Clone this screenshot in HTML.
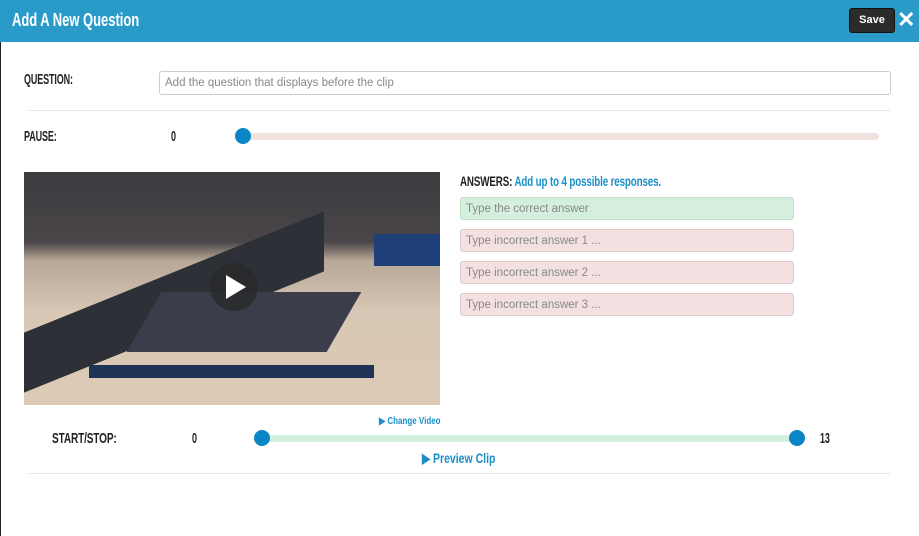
<!DOCTYPE html>
<html><head><style>
*{margin:0;padding:0;box-sizing:border-box}
body{width:919px;height:536px;background:#fff;position:relative;overflow:hidden;font-family:"Liberation Sans",sans-serif}
.c{font-family:"Liberation Sans",sans-serif;transform-origin:0 50%;white-space:nowrap}
.a{position:absolute}
.hdr{left:0;top:0;width:919px;height:42px;background:#2a9ac9}
.lbl{font-size:15px;color:#222;line-height:16px;font-weight:bold;letter-spacing:-0.2px}
.inp{border:1px solid #ccc;border-radius:3px;font-size:11.5px;color:#888;padding-left:5px;display:flex;align-items:center}
.knob{width:16px;height:16px;border-radius:50%;background:#0a86c6}
.blue{color:#1b8fc8}
</style></head><body>
<div class="a hdr"></div>
<div class="a c" style="left:12px;top:10px;font-size:18px;font-weight:bold;color:#fff;transform:scaleX(0.72)">Add A New Question</div>
<div class="a" style="left:849px;top:8px;width:46px;height:25px;background:#2b2b2b;border-radius:3px;border:1px solid #111;color:#fff;font-size:11px;font-weight:bold;text-align:center;line-height:23px">Save</div>
<div class="a" style="left:897px;top:7px;color:#fff;font-size:22px;font-weight:bold;line-height:26px">✕</div>
<div class="a" style="left:0;top:42px;width:1px;height:494px;background:#222"></div>

<div class="a c lbl" style="left:24px;top:72px;transform:scaleX(0.6)">QUESTION:</div>
<div class="a inp" style="left:159px;top:71px;width:732px;height:24px">Add the question that displays before the clip</div>
<div class="a" style="left:28px;top:110px;width:862px;height:1px;background:#e6e6e6"></div>

<div class="a c lbl" style="left:24px;top:129px;transform:scaleX(0.6)">PAUSE:</div>
<div class="a c lbl" style="left:171px;top:129px;transform:scaleX(0.6)">0</div>
<div class="a" style="left:243px;top:133px;width:636px;height:7px;background:#f2e1e1;border-radius:4px"></div>
<div class="a knob" style="left:235px;top:128px"></div>

<div class="a" style="left:24px;top:172px;width:416px;height:233px;overflow:hidden;background:linear-gradient(180deg,#3c3c40 0%,#4a4548 30%,#b7a797 38%,#d8c7b4 60%,#dccab6 100%)">
 <div class="a" style="left:0;top:100px;width:300px;height:60px;background:#2e3038;transform:skewY(-22deg)"></div>
 <div class="a" style="left:120px;top:120px;width:200px;height:60px;background:#3b3e4a;transform:skewX(-30deg)"></div>
 <div class="a" style="left:350px;top:62px;width:66px;height:32px;background:#1e3f78"></div>
 <div class="a" style="left:65px;top:193px;width:285px;height:13px;background:#1d3457"></div>
 <div class="a" style="left:186px;top:91px;width:48px;height:48px;border-radius:50%;background:rgba(40,40,40,.75)"></div>
 <div class="a" style="left:202px;top:103px;width:0;height:0;border-left:20px solid #fff;border-top:12px solid transparent;border-bottom:12px solid transparent"></div>
</div>

<div class="a c lbl" style="left:460px;top:173px;font-size:14px;transform:scaleX(0.7)"><span style="color:#222">ANSWERS:</span> <span class="blue">Add up to 4 possible responses.</span></div>
<div class="a inp" style="left:460px;top:197px;width:334px;height:23px;background:#d4efdd;border-color:#c3dfcc">Type the correct answer</div>
<div class="a inp" style="left:460px;top:229px;width:334px;height:23px;background:#f2e1e0;border-color:#dfcaca">Type incorrect answer 1 ...</div>
<div class="a inp" style="left:460px;top:261px;width:334px;height:23px;background:#f2e1e0;border-color:#dfcaca">Type incorrect answer 2 ...</div>
<div class="a inp" style="left:460px;top:293px;width:334px;height:23px;background:#f2e1e0;border-color:#dfcaca">Type incorrect answer 3 ...</div>

<div class="a c blue" style="left:379px;top:416px;font-size:10px;font-weight:bold;transform:scaleX(0.8)">▶ Change Video</div>
<div class="a c lbl" style="left:52px;top:431px;transform:scaleX(0.67)">START/STOP:</div>
<div class="a c lbl" style="left:192px;top:431px;transform:scaleX(0.6)">0</div>
<div class="a" style="left:262px;top:435px;width:535px;height:7px;background:#d3efdd"></div>
<div class="a knob" style="left:254px;top:430px"></div>
<div class="a knob" style="left:789px;top:430px"></div>
<div class="a c lbl" style="left:820px;top:431px;transform:scaleX(0.6)">13</div>
<div class="a c blue" style="left:422px;top:450px;font-size:14px;font-weight:bold;transform:scaleX(0.75)">▶ Preview Clip</div>
<div class="a" style="left:28px;top:473px;width:862px;height:1px;background:#e6e6e6"></div>
</body></html>
